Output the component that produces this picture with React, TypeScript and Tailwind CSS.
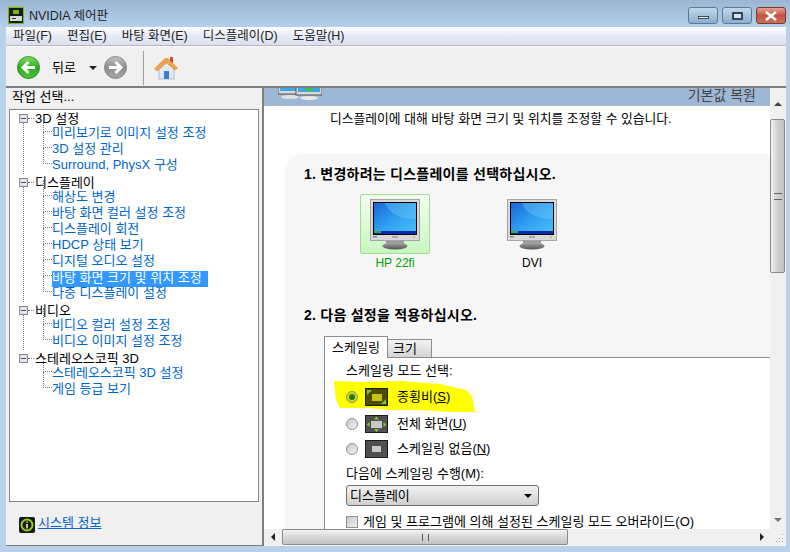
import React from 'react';

const Monitor: React.FC<{ id: string; className?: string }> = ({ id, className }) => (
    <svg viewBox="0 0 50 51" width="50" height="51" className={className}>
        <defs>
            <linearGradient id={`${id}-screen`} x1="0" y1="0" x2="1" y2="1">
                <stop offset="0" stopColor="#1a66d8" />
                <stop offset="0.5" stopColor="#2ea0f0" />
                <stop offset="1" stopColor="#4cc0fa" />
            </linearGradient>
            <linearGradient id={`${id}-base`} x1="0" y1="0" x2="0" y2="1">
                <stop offset="0" stopColor="#a8a8a8" />
                <stop offset="1" stopColor="#555" />
            </linearGradient>
        </defs>
        <rect x="16" y="40" width="18" height="6" fill="#999" />
        <ellipse cx="25" cy="47" rx="12.5" ry="3.5" fill={`url(#${id}-base)`} />
        <rect x="0.5" y="0.5" width="49" height="41" fill="#d8d8d8" stroke="#a5a5a5" />
        <rect x="3" y="3" width="44" height="33" fill="#000" />
        <rect x="4" y="4" width="42" height="31" fill={`url(#${id}-screen)`} />
        <path d="M15 4 C18 14 30 20 46 20 V4 Z" fill="#7cd0ff" opacity="0.35" />
        <rect x="4" y="32" width="42" height="3" fill="#0c2aa8" />
        <rect x="4" y="32" width="7" height="2" fill="#3ca83c" />
        <rect x="3" y="37" width="4" height="1.5" fill="#888" />
        <rect x="22" y="37" width="6" height="2" fill="#aaa" />
        <rect x="43" y="37" width="2" height="2" fill="#c8c860" />
    </svg>
);

const ArrowButton: React.FC<{ dir: 'left' | 'right'; active: boolean }> = ({ dir, active }) => {
    const id = active ? 'nav-on' : 'nav-off';
    return (
        <svg viewBox="0 0 23 23" width="23" height="23">
            <defs>
                <linearGradient id={id} x1="0" y1="0" x2="0" y2="1">
                    <stop offset="0" stopColor={active ? '#7fdc5c' : '#c4c4c4'} />
                    <stop offset="0.5" stopColor={active ? '#2fae22' : '#8e8e8e'} />
                    <stop offset="1" stopColor={active ? '#4cc236' : '#a8a8a8'} />
                </linearGradient>
            </defs>
            <circle cx="11.5" cy="11.5" r="11" fill={`url(#${id})`} stroke={active ? '#1e7d18' : '#777'} strokeWidth="0.8" />
            <path
                d={dir === 'left' ? 'M18 11.5H7M11.5 6L6 11.5L11.5 17' : 'M5 11.5H16M11.5 6L17 11.5L11.5 17'}
                fill="none"
                stroke="#fff"
                strokeWidth="3"
            />
        </svg>
    );
};

const HomeIcon: React.FC = () => (
    <svg viewBox="0 0 24 24" width="24" height="24">
        <rect x="16" y="1" width="3" height="6" fill="#b5523a" />
        <path d="M5 12V23H20V12L12 6Z" fill="#dfeaf6" stroke="#8aa6c4" strokeWidth="0.6" />
        <rect x="10" y="15" width="5" height="8" fill="#3f7fcf" />
        <path d="M0.5 12.5L11 2.5H14L23.5 12L21 14L12.5 7L3 15Z" fill="#f3a24a" stroke="#d07f2c" strokeWidth="0.5" />
    </svg>
);

const TreeChild: React.FC<{ label: string; selected?: boolean }> = ({ label, selected }) => (
    <div className="relative flex h-4 items-center pl-[42px]">
        <span className="absolute left-[33px] top-[-8px] h-4 w-[9px] border-b border-l border-dotted border-[#777]" />
        {selected ? (
            <span className="h-4 w-[156px] translate-y-[3px] whitespace-nowrap bg-[#3399ff] leading-[14px] text-white">{label}</span>
        ) : (
            <span className="translate-y-px whitespace-nowrap text-[#0066cc]">{label}</span>
        )}
    </div>
);

const TreeGroup: React.FC<{ label: string; items: string[]; selected?: string; last?: boolean }> = ({ label, items, selected, last }) => (
    <div className="relative mb-[2px]">
        {!last && <span className="absolute left-[13px] top-[12px] h-[calc(100%-10px)] border-l border-dotted border-[#777]" />}
        <div className="relative flex h-[14px] items-center">
            <span className="absolute left-[9px] top-[4px] flex h-[9px] w-[9px] items-center justify-center border border-[#8a8a8a] bg-[#e4e4e4]">
                <span className="h-px w-[5px] bg-[#3a5a9a]" />
            </span>
            <span className="absolute left-[18px] top-[8px] w-[6px] border-t border-dotted border-[#777]" />
            <span className="translate-y-[2px] whitespace-nowrap pl-[25px] text-black">{label}</span>
        </div>
        {items.map((item) => (
            <TreeChild key={item} label={item} selected={item === selected} />
        ))}
    </div>
);

const ModeIcon: React.FC<{ kind: 'ratio' | 'full' | 'none'; tint?: boolean }> = ({ kind, tint }) => (
    <svg viewBox="0 0 23 18" width="23" height="18" className="shrink-0">
        <rect x="0.5" y="0.5" width="22" height="17" fill={tint ? '#4d4d00' : '#505050'} stroke="#1c1c1c" />
        {kind === 'ratio' && (
            <>
                <rect x="7" y="6" width="10" height="7" fill="#c4c410" />
                <path d="M2 2H7L2 7ZM21 16H16L21 11Z" fill="#7cc82a" />
            </>
        )}
        {kind === 'full' && (
            <>
                <rect x="6" y="6" width="11" height="7" fill="#c8c8c8" />
                <path d="M11.5 1.5L14 4.5H9ZM11.5 17L14 14H9ZM1.5 9.5L4.5 7V12ZM21.5 9.5L18.5 7V12Z" fill="#7cc82a" />
            </>
        )}
        {kind === 'none' && <rect x="7" y="6" width="9" height="6" fill="#c8c8c8" />}
    </svg>
);

const Radio: React.FC<{ on?: boolean }> = ({ on }) => (
    <span
        className={`flex h-3 w-3 shrink-0 items-center justify-center rounded-full border border-[#8e8f8f] ${
            on ? 'bg-[#d8d800]' : 'bg-gradient-to-br from-[#c8c8c8] to-[#f4f4f4]'
        }`}
    >
        {on && <span className="h-[6px] w-[6px] rounded-full bg-[#1f7a1f]" />}
    </span>
);

const ModeRow: React.FC<{ kind: 'ratio' | 'full' | 'none'; label: string; hotkey: string; on?: boolean; className?: string }> = ({
    kind,
    label,
    hotkey,
    on,
    className,
}) => (
    <div className={`relative flex h-[18px] items-center ${className ?? ''}`}>
        <Radio on={on} />
        <span className="ml-[7px]">
            <ModeIcon kind={kind} tint={on} />
        </span>
        <span className="ml-[9px] whitespace-nowrap text-black">
            {label}(<span className="underline">{hotkey}</span>)
        </span>
    </div>
);

const App: React.FC = () => {
    return (
        <div className="flex h-[552px] w-[790px] flex-col overflow-hidden bg-[#b9d1ea] font-['Liberation_Sans','Noto_Sans_CJK_KR',sans-serif] text-[13px] leading-4">
            {/* Title bar */}
            <div className="flex h-[27px] shrink-0 items-start bg-gradient-to-b from-[#9cb6d2] to-[#b5d0ea]">
                <svg viewBox="0 0 16 17" width="16" height="17" className="ml-2 mt-[7px]">
                    <rect x="0.5" y="0.5" width="15" height="16" fill="#1a1a1a" stroke="#76b900" />
                    <rect x="5" y="3" width="6" height="4" fill="#76b900" />
                    <rect x="2" y="9" width="12" height="5" fill="#d8d8d8" />
                    <rect x="4" y="11" width="4" height="1" fill="#333" />
                </svg>
                <span className="ml-[5px] mt-[8px] text-[12.5px] text-[#222]">NVIDIA 제어판</span>
                <div className="ml-auto mr-[4px] mt-[7px] flex gap-1">
                    <div className="flex h-[17px] w-[30px] items-end justify-center rounded-[3px] border border-[#5a7a9c] bg-gradient-to-b from-[#c4d8ec] to-[#8dadcc] pb-1">
                        <span className="h-[3px] w-[11px] border border-[#33475c] bg-white" />
                    </div>
                    <div className="flex h-[17px] w-[30px] items-center justify-center rounded-[3px] border border-[#5a7a9c] bg-gradient-to-b from-[#c4d8ec] to-[#8dadcc]">
                        <span className="h-2 w-[11px] rounded-[1px] border-2 border-[#33475c] bg-[#d5e2ef]" />
                    </div>
                    <div className="flex h-[17px] w-[30px] items-center justify-center rounded-[3px] border border-[#7a3a30] bg-gradient-to-b from-[#e2a398] via-[#c9503f] to-[#c87060]">
                        <svg viewBox="0 0 12 10" width="12" height="10">
                            <path d="M1 1L11 9M11 1L1 9" stroke="#fff" strokeWidth="2.6" />
                        </svg>
                    </div>
                </div>
            </div>

            {/* Window body */}
            <div className="ml-[6px] flex h-[519px] w-[780px] shrink-0 flex-col bg-[#f0f0f0]">
                {/* Menu */}
                <div className="flex h-[19px] shrink-0 items-center gap-[15px] border-b border-[#b4b4bc] bg-gradient-to-b from-white via-[#e6eaf6] to-[#dbe0f2] pl-[7px] text-[12.5px] text-[#222]">
                    <span>파일(F)</span>
                    <span>편집(E)</span>
                    <span>바탕 화면(E)</span>
                    <span>디스플레이(D)</span>
                    <span>도움말(H)</span>
                </div>

                {/* Toolbar */}
                <div className="flex h-[42px] shrink-0 items-center border-t border-white border-b-2 border-b-[#808080] pl-[11px] pt-[2px]">
                    <ArrowButton dir="left" active />
                    <span className="ml-[12px] text-black">뒤로</span>
                    <span className="ml-[13px] h-0 w-0 border-x-[4px] border-t-[4px] border-x-transparent border-t-[#222]" />
                    <span className="ml-[7px]">
                        <ArrowButton dir="right" active={false} />
                    </span>
                    <span className="ml-[16px] h-[34px] w-px bg-[#a0a0a0]" />
                    <span className="ml-[10px]">
                        <HomeIcon />
                    </span>
                </div>

                <div className="flex min-h-0 flex-1">
                    {/* Left panel */}
                    <div className="flex w-[258px] shrink-0 flex-col border-b border-r-2 border-[#808080]">
                        <div className="h-[21px] shrink-0 pl-[6px] pt-[1px] text-black">작업 선택...</div>
                        <div className="ml-[3px] h-[393px] w-[250px] shrink-0 border border-[#828790] bg-white">
                            <TreeGroup label="3D 설정" items={['미리보기로 이미지 설정 조정', '3D 설정 관리', 'Surround, PhysX 구성']} />
                            <TreeGroup
                                label="디스플레이"
                                items={[
                                    '해상도 변경',
                                    '바탕 화면 컬러 설정 조정',
                                    '디스플레이 회전',
                                    'HDCP 상태 보기',
                                    '디지털 오디오 설정',
                                    '바탕 화면 크기 및 위치 조정',
                                    '다중 디스플레이 설정',
                                ]}
                                selected="바탕 화면 크기 및 위치 조정"
                            />
                            <TreeGroup label="비디오" items={['비디오 컬러 설정 조정', '비디오 이미지 설정 조정']} />
                            <TreeGroup label="스테레오스코픽 3D" items={['스테레오스코픽 3D 설정', '게임 등급 보기']} last />
                        </div>
                        <div className="ml-[13px] mt-[15px] flex items-center gap-[3px]">
                            <svg viewBox="0 0 16 16" width="16" height="16">
                                <rect width="16" height="16" rx="2" fill="#1a1a1a" />
                                <circle cx="8" cy="8" r="5.5" fill="none" stroke="#8fd11f" strokeWidth="2" />
                                <path d="M8 4.5V5.8M8 7V11.5" stroke="#e6f5b0" strokeWidth="1.6" />
                            </svg>
                            <span className="-translate-y-[2px] text-[#0066cc] underline">시스템 정보</span>
                        </div>
                    </div>

                    {/* Right panel */}
                    <div className="flex min-w-0 flex-1 flex-col border-b border-[#f8f8f8] bg-white">
                        <div className="flex min-h-0 flex-1">
                            <div className="min-w-0 flex-1 overflow-hidden">
                                <div className="flex h-[18px] items-start justify-between overflow-hidden bg-[#9db8d4] pl-[14px] pr-[14px]">
                                    <svg viewBox="0 0 44 12" width="44" height="12">
                                        <rect x="0" y="-8" width="26" height="14" fill="#d8d8d8" stroke="#555" />
                                        <rect x="2" y="-6" width="22" height="9" fill="#3ea6e8" />
                                        <ellipse cx="12" cy="9" rx="9" ry="2" fill="#e0e0e0" />
                                        <rect x="18" y="-6" width="26" height="13" fill="#d8d8d8" stroke="#555" />
                                        <rect x="20" y="-5" width="22" height="9" fill="#3ea6e8" />
                                        <rect x="27" y="0" width="8" height="3" fill="#38c050" />
                                        <ellipse cx="31" cy="10" rx="9" ry="2" fill="#e8e8e8" />
                                    </svg>
                                    <span className="-translate-y-px text-[14px] text-[#444]">기본값 복원</span>
                                </div>
                                <div className="h-[48px] whitespace-nowrap pl-[66px] pt-[5px] text-[12.8px] text-black">
                                    디스플레이에 대해 바탕 화면 크기 및 위치를 조정할 수 있습니다.
                                </div>
                                <div className="ml-[21px] h-[400px] rounded-tl-[18px] bg-[#f6f6f6] pl-[19px] pt-[12px]">
                                    <div className="whitespace-nowrap text-[14px] font-bold tracking-[0.25px] text-black">1. 변경하려는 디스플레이를 선택하십시오.</div>
                                    <div className="mt-[12px] flex">
                                        <div className="ml-[56px] flex w-[70px] flex-col items-center">
                                            <div className="flex h-[60px] w-[70px] justify-center rounded-[2px] border border-[#a0e090] bg-gradient-to-b from-[#f2fff0] to-[#c8f5c0] pt-[4px]">
                                                <Monitor id="m1" />
                                            </div>
                                            <span className="mt-[1px] text-[12px] text-[#00a800]">HP 22fi</span>
                                        </div>
                                        <div className="ml-[77px] flex w-[50px] flex-col items-center pt-[5px]">
                                            <Monitor id="m2" />
                                            <span className="mt-[5px] whitespace-nowrap text-[12px] text-black">DVI</span>
                                        </div>
                                    </div>
                                    <div className="mt-[36px] whitespace-nowrap text-[14px] font-bold tracking-[0.25px] text-black">2. 다음 설정을 적용하십시오.</div>

                                    {/* Tabs */}
                                    <div className="ml-[20px] mt-[13px] flex h-[21px] items-end">
                                        <div className="relative z-10 -mb-px flex h-[22px] w-[64px] items-center justify-center border border-b-0 border-[#898c95] bg-white text-black">
                                            스케일링
                                        </div>
                                        <div className="flex h-[18px] w-[44px] items-center border border-b-0 border-l-0 border-[#898c95] bg-gradient-to-b from-[#f2f2f2] to-[#d5d5d5] pl-[5px] text-black">
                                            크기
                                        </div>
                                    </div>
                                    <div className="relative ml-[20px] h-[200px] border-l border-t border-[#898c95] bg-white pl-[21px] pt-[5px]">
                                        <svg width="145" height="34" viewBox="0 0 145 34" className="absolute left-[8px] top-[22px]">
                                            <path
                                                d="M1 1 L27 2 L67 1 L107 4 L133 10 L139 16 L142 32 L117 32 L87 30 L57 30 L37 28 L7 28 L3 20 Z"
                                                fill="#ffff00"
                                            />
                                        </svg>
                                        <div className="whitespace-nowrap text-black">스케일링 모드 선택:</div>
                                        <ModeRow kind="ratio" label="종횡비" hotkey="S" on className="mt-[9px]" />
                                        <ModeRow kind="full" label="전체 화면" hotkey="U" className="mt-[9px]" />
                                        <ModeRow kind="none" label="스케일링 없음" hotkey="N" className="mt-[7px]" />
                                        <div className="mt-[8px] whitespace-nowrap text-black">다음에 스케일링 수행(M):</div>
                                        <div className="mt-[3px] flex h-[21px] w-[193px] items-center justify-between rounded-[3px] border border-[#707070] bg-gradient-to-b from-[#f2f2f2] to-[#d0d0d0] pl-[3px] pr-[6px] text-black">
                                            <span>디스플레이</span>
                                            <span className="h-0 w-0 border-x-[4px] border-t-[4px] border-x-transparent border-t-black" />
                                        </div>
                                        <div className="mt-[8px] flex items-center gap-[5px] whitespace-nowrap text-black">
                                            <span className="h-3 w-3 shrink-0 border border-[#8e8f8f] bg-gradient-to-br from-[#c8c8c8] to-[#f0f0f0]" />
                                            게임 및 프로그램에 의해 설정된 스케일링 모드 오버라이드(O)
                                        </div>
                                    </div>
                                </div>
                            </div>

                            {/* Vertical scrollbar */}
                            <div className="flex w-[16px] shrink-0 flex-col bg-[#f0f0f0]">
                                <div className="flex h-[31px] shrink-0 items-center justify-center">
                                    <span className="h-0 w-0 border-x-[4px] border-b-[4px] border-x-transparent border-b-[#444]" />
                                </div>
                                <div className="flex h-[154px] w-[15px] shrink-0 items-center justify-center rounded-[2px] border border-[#8a8a8a] bg-gradient-to-r from-[#f4f4f4] via-[#d0d0d0] to-[#c0c0c0]">
                                    <span className="h-[7px] w-[8px] border-y border-[#666]" />
                                </div>
                                <div className="flex flex-1 items-end justify-center pb-[7px]">
                                    <span className="h-0 w-0 border-x-[4px] border-t-[4px] border-x-transparent border-t-[#777]" />
                                </div>
                            </div>
                        </div>

                        {/* Horizontal scrollbar */}
                        <div className="flex h-[16px] shrink-0 items-center bg-[#f0f0f0]">
                            <div className="flex w-[18px] shrink-0 justify-center">
                                <span className="h-0 w-0 border-y-[4px] border-r-[4px] border-y-transparent border-r-[#222]" />
                            </div>
                            <div className="flex h-[16px] w-[286px] shrink-0 items-center justify-center rounded-[2px] border border-[#8a8a8a] bg-gradient-to-b from-[#f4f4f4] via-[#d8d8d8] to-[#c4c4c4]">
                                <span className="h-[7px] w-[7px] border-x border-[#555]" />
                            </div>
                            <div className="flex flex-1 justify-end pr-[6px]">
                                <span className="h-0 w-0 border-y-[4px] border-l-[4px] border-y-transparent border-l-[#222]" />
                            </div>
                            <svg viewBox="0 0 16 16" width="16" height="16" className="shrink-0">
                                <path d="M12 5h1v1h-1zM9 9h1v1H9zM12 9h1v1h-1zM6 12h1v1H6zM9 12h1v1H9zM12 12h1v1h-1z" fill="#a8a8a8" />
                            </svg>
                        </div>
                    </div>
                </div>
            </div>
        </div>
    );
};

export default App;
